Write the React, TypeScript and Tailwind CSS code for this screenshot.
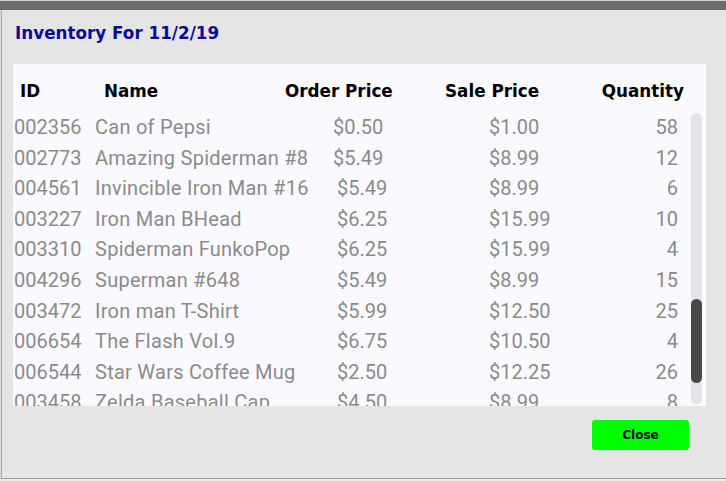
import React from "react";

const rows: [string, string, string, string, string, boolean][] = [
  ["002356", "Can of Pepsi", "$0.50", "$1.00", "58", true],
  ["002773", "Amazing Spiderman #8", "$5.49", "$8.99", "12", true],
  ["004561", "Invincible Iron Man #16", "$5.49", "$8.99", "6", false],
  ["003227", "Iron Man BHead", "$6.25", "$15.99", "10", false],
  ["003310", "Spiderman FunkoPop", "$6.25", "$15.99", "4", false],
  ["004296", "Superman #648", "$5.49", "$8.99", "15", false],
  ["003472", "Iron man T-Shirt", "$5.99", "$12.50", "25", false],
  ["006654", "The Flash Vol.9", "$6.75", "$10.50", "4", false],
  ["006544", "Star Wars Coffee Mug", "$2.50", "$12.25", "26", false],
  ["003458", "Zelda Baseball Cap", "$4.50", "$8.99", "8", false],
];

const bold = { fontFamily: '"DejaVu Sans", Verdana, sans-serif' };

export default function App() {
  return (
    <div className="w-[726px] h-[481px] bg-[#d9d9d9] flex flex-col overflow-hidden">
      <div className="h-[1px] shrink-0 bg-[#d4d4d4]" />
      <div className="h-[9px] shrink-0 bg-[#6d6d6d]" />
      <div className="flex-1 flex flex-col bg-[#e5e5e5] border-l border-[#ababab] ml-[1px]">
        <div
          className="h-[54px] shrink-0 pt-[11px] pl-[13px] text-[16.8px] font-bold text-[#0b0b98]"
          style={bold}
        >
          Inventory For 11/2/19
        </div>
        <div className="ml-[11px] w-[693px] h-[342px] shrink-0 bg-[#f9f9fe] flex overflow-hidden">
          <div className="w-[678px] flex flex-col overflow-hidden">
            <div
              className="h-[48px] shrink-0 pt-[7px] flex items-center text-[16.8px] font-bold text-black whitespace-nowrap"
              style={bold}
            >
              <div className="w-[91px] pl-[7px]">ID</div>
              <div className="w-[181px]">Name</div>
              <div className="w-[160px]">Order Price</div>
              <div className="w-[150px]">Sale Price</div>
              <div className="flex-1 text-right pr-[7px]">Quantity</div>
            </div>
            <div
              className="flex flex-col text-[20px] text-[#8b8b8b]"
              style={{ fontFamily: 'Roboto, "Noto Sans", sans-serif' }}
            >
              {rows.map((r) => (
                <div key={r[0]} className="h-[30.56px] shrink-0 flex items-center whitespace-nowrap">
                  <div className="w-[82px] pl-[1px]">{r[0]}</div>
                  <div className="w-[238px] tracking-[0.26px]">{r[1]}</div>
                  <div className={r[5] ? "w-[156px]" : "w-[156px] pl-[4px]"}>{r[2]}</div>
                  <div className="w-[100px]">{r[3]}</div>
                  <div className="flex-1 text-right pr-[13px]">{r[4]}</div>
                </div>
              ))}
            </div>
          </div>
          <div className="w-[11px] pt-[49px] pb-[2px] flex flex-col">
            <div className="flex-1 rounded-full bg-[#e4e4ea] flex flex-col pt-[186px] pb-[21px]">
              <div className="flex-1 rounded-full bg-[#484848]" />
            </div>
          </div>
        </div>
        <div className="flex justify-end pr-[37px] pt-[14px]">
          <button
            className="w-[97px] h-[30px] rounded-[3px] bg-[#00ff00] text-[12px] font-bold text-black"
            style={bold}
          >
            Close
          </button>
        </div>
        <div className="flex-1" />
        <div className="h-[1px] bg-[#9c9c9c] -ml-[1px]" />
        <div className="h-[2px] bg-[#e9e9e9] -ml-[1px]" />
      </div>
    </div>
  );
}
